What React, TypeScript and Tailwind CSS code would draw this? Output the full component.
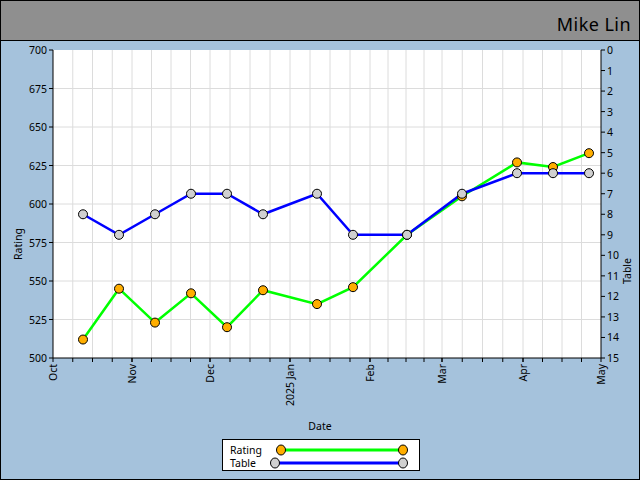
import React from "react";

const L = 52, R = 600, T = 9, B = 317;
const ry = (v: number) => B - ((v - 500) / 200) * (B - T);
const ty = (v: number) => T + (v / 15) * (B - T);
const months = [
  ["Oct", 52], ["Nov", 131], ["Dec", 209], ["2025 Jan", 289], ["Feb", 369], ["Mar", 441], ["Apr", 522], ["May", 600],
] as const;
const rating: [number, number][] = [[82,512],[118,545],[154,523],[190,542],[226,520],[262,544],[316,535],[352,546],[406,580],[461,605],[516,627],[552,624],[588,633]];
const table: [number, number][] = [[82,8],[118,9],[154,8],[190,7],[226,7],[262,8],[316,7],[352,9],[406,9],[461,7],[516,6],[552,6],[588,6]];

const tick = "font-['DejaVu_Sans_Condensed','DejaVu_Sans',sans-serif] text-[10.5px]";
const serif = "font-['DejaVu_Serif',serif] text-[10.5px]";

export default function App() {
  const grid: number[] = [];
  for (let i = 0; i < months.length - 1; i++) {
    const a = months[i][1], b = months[i + 1][1];
    for (let k = 1; k < 4; k++) grid.push(a + ((b - a) * k) / 4);
    if (i > 0) grid.push(a);
  }
  const rp = rating.map(([x, v]) => `${x},${ry(v)}`).join(" ");
  const tp = table.map(([x, v]) => `${x},${ty(v)}`).join(" ");
  return (
    <div className="w-[640px] h-[480px] border border-black bg-[#a5c2dc] flex flex-col overflow-hidden">
      <div className="h-[40px] shrink-0 bg-[#8f8f8f] border-b border-black flex items-end justify-end pr-2 pb-[7px]">
        <span className="text-[18px] leading-none text-black tracking-wide font-['Comic_Sans_MS',cursive]">Mike Lin</span>
      </div>
      <svg width="638" height="438" className="block">
        <rect x={L} y={T} width={R - L} height={B - T} fill="#fff" />
        {grid.map((x, i) => <line key={i} x1={x} x2={x} y1={T} y2={B} stroke="#dcdcdc" />)}
        {[525, 550, 575, 600, 625, 650, 675].map(v => <line key={v} x1={L} x2={R} y1={ry(v)} y2={ry(v)} stroke="#dcdcdc" />)}
        <line x1={L} x2={L} y1={T} y2={B} stroke="#000" />
        <line x1={R} x2={R} y1={T} y2={B} stroke="#000" />
        <line x1={L} x2={R} y1={B} y2={B} stroke="#000" />
        {[500, 525, 550, 575, 600, 625, 650, 675, 700].map(v => (
          <g key={v}>
            <line x1={L - 4} x2={L} y1={ry(v)} y2={ry(v)} stroke="#000" />
            <text x={L - 6} y={ry(v) + 4} textAnchor="end" className={tick}>{v}</text>
          </g>
        ))}
        {Array.from({ length: 16 }, (_, v) => (
          <g key={v}>
            <line x1={R} x2={R + 4} y1={ty(v)} y2={ty(v)} stroke="#000" />
            <text x={R + 6} y={ty(v) + 4} className={tick}>{v}</text>
          </g>
        ))}
        {grid.concat(months.map(m => m[1] as number)).map((x, i) => <line key={i} x1={x} x2={x} y1={B} y2={B + 4} stroke="#000" />)}
        {months.map(([n, x]) => (
          <text key={n} transform={`translate(${x + 4},${B + 6}) rotate(-90)`} textAnchor="end" className={serif}>{n}</text>
        ))}
        <text x={319} y={389} textAnchor="middle" className={serif}>Date</text>
        <text transform="translate(21,203) rotate(-90)" textAnchor="middle" className={serif}>Rating</text>
        <text transform="translate(630,230) rotate(-90)" textAnchor="middle" className={serif}>Table</text>
        <polyline points={rp} fill="none" stroke="#00ff00" strokeWidth={2.5} />
        <polyline points={tp} fill="none" stroke="#0000ff" strokeWidth={2.5} />
        {rating.map(([x, v], i) => <ellipse key={i} cx={x} cy={ry(v)} rx={4.5} ry={4.5} fill="#ffae00" stroke="#000" />)}
        {table.map(([x, v], i) => <ellipse key={i} cx={x} cy={ty(v)} rx={4.5} ry={4.5} fill="#d0d0d0" stroke="#000" />)}
        <rect x={221.5} y={398.5} width={197} height={31} fill="#fff" stroke="#000" />
        <text x={229} y={413} className={serif}>Rating</text>
        <text x={229} y={426} className={serif}>Table</text>
        <line x1={280} x2={402} y1={409} y2={409} stroke="#00ff00" strokeWidth={3} />
        <line x1={274} x2={402} y1={422} y2={422} stroke="#0000ff" strokeWidth={3} />
        <ellipse cx={280} cy={409} rx={4.5} ry={5} fill="#ffae00" stroke="#000" />
        <ellipse cx={402} cy={409} rx={4.5} ry={5} fill="#ffae00" stroke="#000" />
        <ellipse cx={274} cy={422} rx={4.5} ry={5} fill="#d0d0d0" stroke="#000" />
        <ellipse cx={402} cy={422} rx={4.5} ry={5} fill="#d0d0d0" stroke="#000" />
      </svg>
    </div>
  );
}
